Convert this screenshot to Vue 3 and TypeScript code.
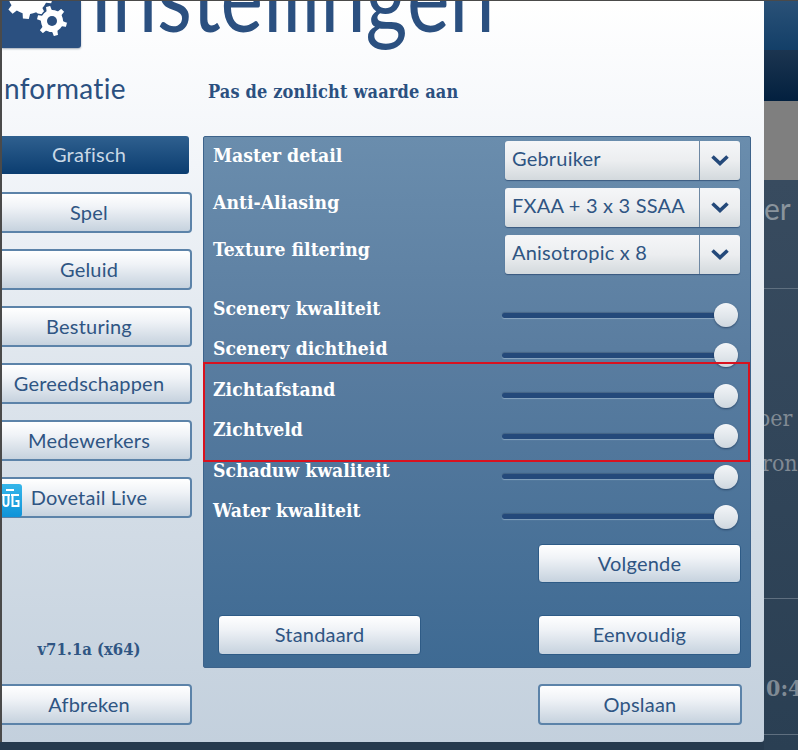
<script setup lang="ts">
const navItems = ['Spel', 'Geluid', 'Besturing', 'Gereedschappen', 'Medewerkers']
const selects = [
  { label: 'Master detail', value: 'Gebruiker' },
  { label: 'Anti-Aliasing', value: 'FXAA + 3 x 3 SSAA' },
  { label: 'Texture filtering', value: 'Anisotropic x 8' },
]
const sliders = ['Scenery kwaliteit', 'Scenery dichtheid', 'Zichtafstand', 'Zichtveld', 'Schaduw kwaliteit', 'Water kwaliteit']

function gear(cx: number, cy: number, r: number, teeth: number, inner: number): string {
  const pts: string[] = []
  const step = (Math.PI * 2) / teeth
  for (let i = 0; i < teeth; i++) {
    const a = i * step + 0.26
    const seq: [number, number][] = [
      [r * inner, a - step * 0.5],
      [r * inner, a - step * 0.27],
      [r, a - step * 0.17],
      [r, a + step * 0.17],
      [r * inner, a + step * 0.27],
    ]
    for (const [rad, ang] of seq) {
      pts.push(`${(cx + rad * Math.cos(ang)).toFixed(1)} ${(cy + rad * Math.sin(ang)).toFixed(1)}`)
    }
  }
  return 'M' + pts.join('L') + 'Z'
}
const smallGear = gear(50, 20, 16, 6, 0.74)
const bigGear = gear(26, -7, 25, 9, 0.8)
</script>

<template>
  <div class="screen">
    <div class="dialog">
      <header class="head">
        <div class="logo">
          <svg width="79" height="48" viewBox="0 0 79 48">
            <path :d="bigGear" fill="#fff" />
            <path :d="smallGear" fill="#fff" stroke="#2b5080" stroke-width="1.500" stroke-linejoin="round" />
            <circle cx="50" cy="20" r="5" fill="#2b5080" />
          </svg>
        </div>
        <h1 class="title">Instellingen</h1>
      </header>
      <div class="subhead">
        <div class="info">Informatie</div>
        <div class="hint">Pas de zonlicht waarde aan</div>
      </div>
      <div class="main">
        <nav class="nav">
          <button class="btn active">Grafisch</button>
          <button v-for="n in navItems" :key="n" class="btn outlined">{{ n }}</button>
          <button class="btn outlined dovetail">
            <svg class="dt" width="24" height="33" viewBox="0 0 24 33">
              <defs>
                <linearGradient id="dtg" x1="0" y1="0" x2="0" y2="1">
                  <stop offset="0" stop-color="#35b6ea" />
                  <stop offset="1" stop-color="#0f93d8" />
                </linearGradient>
              </defs>
              <rect x="-6" y="0" width="30" height="33" rx="3" fill="url(#dtg)" />
              <path d="M8 6h8M4 11h8M5.500 11v8c0 4 5 4 5 0v-8M13 11h8M14.500 11v11h6v-5h-3" fill="none" stroke="#fff" stroke-width="2" />
            </svg>
            <span>Dovetail Live</span>
          </button>
          <div class="version">v71.1a (x64)</div>
          <button class="btn outlined">Afbreken</button>
        </nav>
        <div class="content">
          <section class="panel">
            <div v-for="s in selects" :key="s.label" class="select-row">
              <div class="label">{{ s.label }}</div>
              <div class="select">
                <span class="select-value">{{ s.value }}</span>
                <span class="select-arrow">
                  <svg width="20" height="13" viewBox="0 0 20 13">
                    <path d="M2.500 2.500 10 9.500l7.500-7" fill="none" stroke="#24497a" stroke-width="3.600" />
                  </svg>
                </span>
              </div>
            </div>
            <div class="sliders">
              <div v-for="s in sliders" :key="s" class="slider-row">
                <div class="label slider-label">{{ s }}</div>
                <div class="slider">
                  <div class="track"></div>
                  <div class="thumb"></div>
                </div>
              </div>
            </div>
            <div class="next-row">
              <button class="btn plain next">Volgende</button>
            </div>
            <div class="bottom-row">
              <button class="btn plain">Standaard</button>
              <button class="btn plain">Eenvoudig</button>
            </div>
          </section>
          <div class="footer">
            <button class="btn outlined save">Opslaan</button>
          </div>
        </div>
      </div>
    </div>
    <aside class="behind">
      <div class="b-blue"></div>
      <div class="b-dark"></div>
      <div class="b-grey"></div>
      <div class="b-rest">
        <div class="frag frag-er">er</div>
        <div class="rule rule-1"></div>
        <div class="frag frag-per">per</div>
        <div class="frag frag-ron">ron</div>
        <div class="rule rule-2"></div>
        <div class="frag frag-time">0:4</div>
        <div class="rule rule-3"></div>
      </div>
    </aside>
    <div class="marker"></div>
  </div>
</template>

<style scoped>
.screen {
  position: relative;
  display: flex;
  width: 798px;
  height: 750px;
  overflow: hidden;
  background: #263a4e;
  border-top: 1px solid #4a4a4a;
  box-sizing: border-box;
}
.screen::before {
  content: "";
  width: 2px;
  height: 741px;
  flex: none;
  background: #4a4a4a;
}
.dialog {
  width: 762px;
  height: 741px;
  flex: none;
  overflow: hidden;
  background: linear-gradient(180deg, #ffffff 0%, #f2f5f9 22%, #d6dfe8 62%, #c3d0dd 100%);
  border-bottom-right-radius: 3px;
}
.head {
  display: flex;
  height: 72px;
}
.logo {
  width: 79px;
  height: 47px;
  flex: none;
  background: #2b5080;
  border-radius: 0 0 3px 0;
  box-shadow: 0 1px 2px rgba(30, 50, 80, 0.4);
  overflow: hidden;
}
.logo svg {
  display: block;
}
.title {
  margin: -56px 0 0 9px;
  font: 400 96px/100px Lato, sans-serif;
  color: #2b5080;
  white-space: nowrap;
  transform: scaleX(.84);
  transform-origin: left top;
}
.subhead {
  display: flex;
  align-items: flex-start;
  height: 63px;
  color: #2b5080;
}
.info {
  width: 212px;
  margin-left: -6px;
  flex: none;
  font: 400 28px/32px Lato, sans-serif;
  margin-top: -1px;
  letter-spacing: .3px;
}
.hint {
  font: 700 18px/24px "DejaVu Serif Condensed", "DejaVu Serif", serif;
  margin-top: 7px;
  letter-spacing: .15px;
}
.main {
  display: flex;
}
.nav {
  display: flex;
  flex-direction: column;
  width: 206px;
  height: 589px;
  margin-left: -16px;
  flex: none;
  gap: 16px;
}
.btn {
  display: flex;
  align-items: center;
  justify-content: center;
  height: 41px;
  padding: 0 0 2px;
  box-sizing: border-box;
  flex: none;
  font: 400 20px/24px Lato, sans-serif;
  color: #2f5583;
  letter-spacing: .2px;
  border-radius: 4px;
  background: linear-gradient(180deg, #ffffff 0%, #f0f3f7 35%, #c6d2de 100%);
}
.outlined {
  border: 2px solid #5c83a9;
}
.plain {
  width: 203px;
  height: 40px;
  border: 1px solid #2e5b86;
}
.next {
  height: 39px;
}
.active {
  height: 38px;
  margin: 0 3px 2px;
  border: 0;
  color: #c9d8e6;
  background: linear-gradient(180deg, #2f608f 0%, #0b3d70 100%);
  border-radius: 3px;
}
.dovetail {
  position: relative;
}
.dt {
  position: absolute;
  left: 10px;
  top: 5px;
  display: block;
}
.version {
  margin-top: auto;
  margin-bottom: 7px;
  text-align: center;
  font: 700 16.500px/22px "DejaVu Serif Condensed", "DejaVu Serif", serif;
  color: #2f5583;
}
.content {
  margin-left: 11px;
  width: 548px;
  flex: none;
}
.panel {
  height: 532px;
  box-sizing: border-box;
  padding: 4px 9px 0;
  background: linear-gradient(180deg, #6a8dad 0%, #5a7da0 40%, #3e6a93 100%);
  border: 1px solid #3d638b;
  border-radius: 2px;
}
.select-row {
  display: flex;
  height: 47px;
}
.label {
  width: 292px;
  flex: none;
  font: 700 19.200px/30px "DejaVu Serif Condensed", "DejaVu Serif", serif;
  color: #fff;
}
.select {
  display: flex;
  width: 235px;
  height: 39px;
  box-sizing: border-box;
  color: #2f5583;
  font: 400 20px/35px Lato, sans-serif;
  letter-spacing: .2px;
  border-radius: 3px;
  background: linear-gradient(180deg, #f5f6f8 0%, #eceef0 50%, #d3d9dd 100%);
  box-shadow: 0 1px 1px rgba(30, 60, 100, .6);
}
.select-value {
  flex: 1;
  padding-left: 7px;
  white-space: nowrap;
  border-right: 1px solid #6e88a3;
}
.select-arrow {
  display: flex;
  align-items: center;
  justify-content: center;
  width: 40px;
  flex: none;
}
.sliders {
  margin-top: 7px;
}
.slider-row {
  display: flex;
  height: 40.400px;
}
.slider-label {
  width: 289px;
  line-height: 40px;
}
.slider {
  display: flex;
  align-items: center;
  width: 236px;
  height: 24px;
  margin-top: 14px;
  flex: none;
}
.track {
  flex: 1;
  height: 5px;
  border-radius: 3px;
  background: #24497a;
  box-shadow: 0 1px 1px rgba(190, 210, 225, .5), 0 -1px 1px rgba(30, 50, 80, .3);
}
.thumb {
  width: 24px;
  height: 24px;
  margin-left: -12px;
  border-radius: 50%;
  flex: none;
  background: linear-gradient(180deg, #f3f5f8 0%, #dfe5ea 60%, #cfd7df 100%);
  box-shadow: 0 1px 2px rgba(20, 40, 70, .6);
}
.next-row {
  display: flex;
  justify-content: flex-end;
  margin-top: 13px;
}
.bottom-row {
  display: flex;
  justify-content: space-between;
  margin: 32px 0 0 5px;
}
.footer {
  display: flex;
  justify-content: flex-end;
  margin-top: 16px;
  padding-right: 9px;
}
.save {
  width: 204px;
}
.behind {
  flex: 1;
  display: flex;
  flex-direction: column;
  overflow: hidden;
  min-width: 0;
}
.b-blue {
  height: 49px;
  background: linear-gradient(180deg, #2a5177 0%, #133f68 100%);
}
.b-dark {
  height: 51px;
  background: linear-gradient(180deg, #1c3550 0%, #02203f 100%);
}
.b-grey {
  height: 79px;
  background: #7f7f7f;
}
.b-rest {
  flex: 1;
  position: relative;
  background: linear-gradient(180deg, #384b5f 0%, #2a3f53 100%);
}
.frag {
  position: absolute;
  white-space: nowrap;
  color: #808a94;
  font: 400 23px/28px "DejaVu Serif Condensed", serif;
}
.frag-er {
  left: 0;
  top: 12px;
  font: 400 30px/32px Lato, sans-serif;
  color: #8a949d;
}
.frag-per {
  left: -7px;
  top: 224px;
}
.frag-ron {
  left: -2px;
  top: 269px;
}
.frag-time {
  left: 2px;
  top: 494px;
  font-weight: 700;
}
.rule {
  position: absolute;
  left: 0;
  right: 0;
  height: 1px;
  background: #5f6f7f;
}
.rule-1 {
  top: 108px;
}
.rule-2 {
  top: 418px;
}
.rule-3 {
  top: 554px;
}
.marker {
  position: absolute;
  left: 203px;
  top: 361px;
  width: 547px;
  height: 100px;
  box-sizing: border-box;
  border: 2px solid #d8121f;
  pointer-events: none;
}
</style>
